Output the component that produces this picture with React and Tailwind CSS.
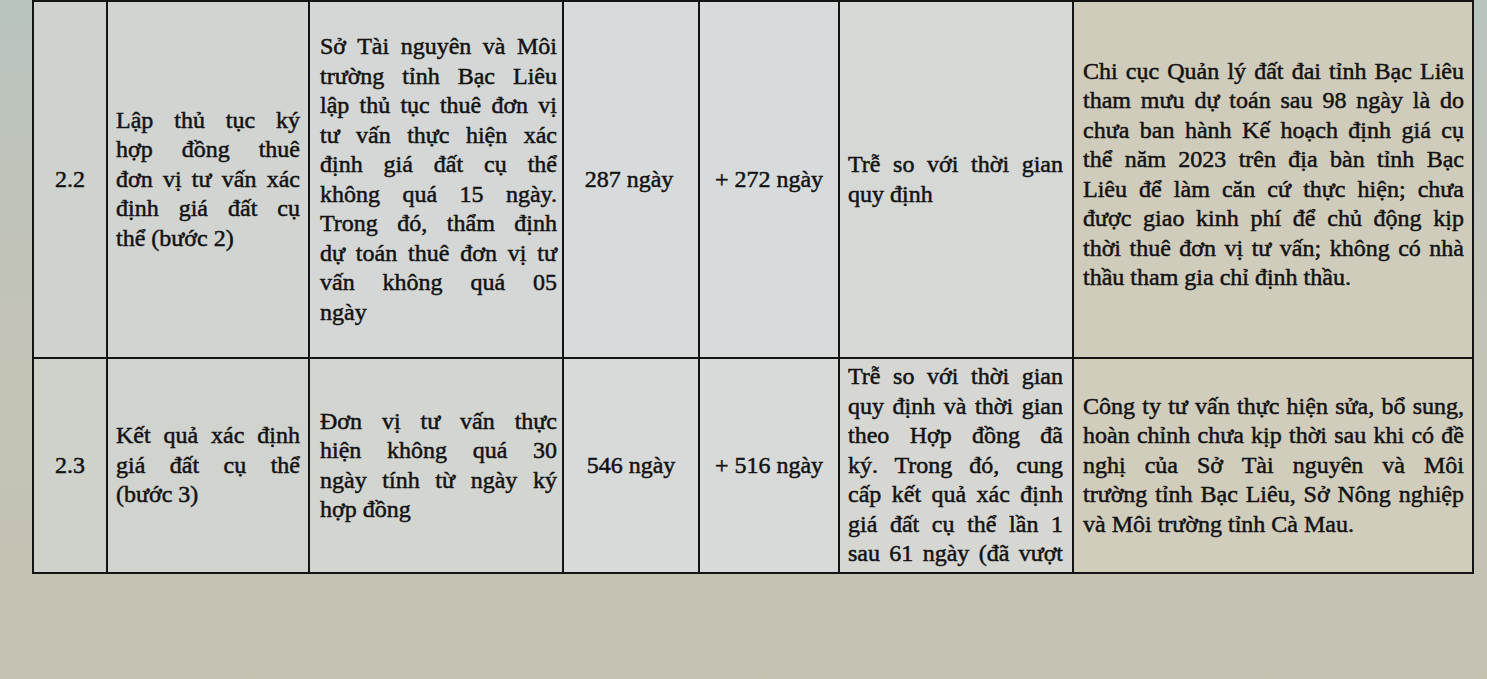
const cell = "border-2 border-[#141414] align-middle"

// each printed line is its own block so the breaks match the paper
function Lines({ lines, justifyLast = false }) {
  return (
    <>
      {lines.map((line, i) => {
        const last = i === lines.length - 1
        return (
          <div
            key={i}
            className={
              "whitespace-nowrap " +
              (last && !justifyLast ? "text-left" : "text-justify [text-align-last:justify]")
            }
          >
            {line}
          </div>
        )
      })}
    </>
  )
}

export default function App() {
  return (
    <div className="min-h-screen w-full bg-linear-to-b from-[#b9c4be] via-[#c4c3b7] to-[#c5c2b2] text-[#121212] [font-family:'Liberation_Serif','Times_New_Roman',serif] text-[24px] leading-[29.5px] [-webkit-text-stroke:0.5px_#121212]">
      <table className="ml-8 w-[1440px] table-fixed border-collapse">
        <colgroup>
          <col className="w-[74px]" />
          <col className="w-[202px]" />
          <col className="w-[254px]" />
          <col className="w-[136px]" />
          <col className="w-[140px]" />
          <col className="w-[234px]" />
          <col className="w-[400px]" />
        </colgroup>
        <tbody>
          <tr className="h-[357px]">
            <td className={cell + " bg-[#cfd3cf] text-center"}>2.2</td>
            <td className={cell + " bg-[#d1d4d1] pl-[8px] pr-[8px]"}>
              <Lines
                lines={[
                  "Lập thủ tục ký",
                  "hợp đồng thuê",
                  "đơn vị tư vấn xác",
                  "định giá đất cụ",
                  "thể (bước 2)",
                ]}
              />
            </td>
            <td className={cell + " bg-[#d4d7d5] pl-[10px] pr-[5px]"}>
              <Lines
                lines={[
                  "Sở Tài nguyên và Môi",
                  "trường tỉnh Bạc Liêu",
                  "lập thủ tục thuê đơn vị",
                  "tư vấn thực hiện xác",
                  "định giá đất cụ thể",
                  "không quá 15 ngày.",
                  "Trong đó, thẩm định",
                  "dự toán thuê đơn vị tư",
                  "vấn không quá 05",
                  "ngày",
                ]}
              />
            </td>
            <td className={cell + " bg-[#d8dbdc] text-center pr-[4px]"}>287 ngày</td>
            <td className={cell + " bg-[#d8dbdc] text-center"}>+ 272 ngày</td>
            <td className={cell + " bg-[#d6d8d6] pl-[8px] pr-[9px]"}>
              <Lines lines={["Trễ so với thời gian", "quy định"]} />
            </td>
            <td className={cell + " bg-[#d0ccbb] pl-[9px] pr-[8px] pb-[10px]"}>
              <Lines
                lines={[
                  "Chi cục Quản lý đất đai tỉnh Bạc Liêu",
                  "tham mưu dự toán sau 98 ngày là do",
                  "chưa ban hành Kế hoạch định giá cụ",
                  "thể năm 2023 trên địa bàn tỉnh Bạc",
                  "Liêu để làm căn cứ thực hiện; chưa",
                  "được giao kinh phí để chủ động kịp",
                  "thời thuê đơn vị tư vấn; không có nhà",
                  "thầu tham gia chỉ định thầu.",
                ]}
              />
            </td>
          </tr>
          <tr className="h-[215px]">
            <td className={cell + " bg-[#cfd1cb] text-center"}>2.3</td>
            <td className={cell + " bg-[#d1d3ce] pl-[8px] pr-[8px]"}>
              <Lines lines={["Kết quả xác định", "giá đất cụ thể", "(bước 3)"]} />
            </td>
            <td className={cell + " bg-[#d3d5d1] pl-[10px] pr-[5px]"}>
              <Lines
                lines={[
                  "Đơn vị tư vấn thực",
                  "hiện không quá 30",
                  "ngày tính từ ngày ký",
                  "hợp đồng",
                ]}
              />
            </td>
            <td className={cell + " bg-[#d8dad9] text-center"}>546 ngày</td>
            <td className={cell + " bg-[#d8dad9] text-center"}>+ 516 ngày</td>
            <td className={cell + " bg-[#d6d7d3] pl-[8px] pr-[9px] align-top pt-[3px]"}>
              <div className="h-[207px] overflow-hidden">
                <Lines
                  justifyLast
                  lines={[
                    "Trễ so với thời gian",
                    "quy định và thời gian",
                    "theo Hợp đồng đã",
                    "ký. Trong đó, cung",
                    "cấp kết quả xác định",
                    "giá đất cụ thể lần 1",
                    "sau 61 ngày (đã vượt",
                  ]}
                />
              </div>
            </td>
            <td className={cell + " bg-[#d1cdbc] pl-[9px] pr-[8px]"}>
              <Lines
                lines={[
                  "Công ty tư vấn thực hiện sửa, bổ sung,",
                  "hoàn chỉnh chưa kịp thời sau khi có đề",
                  "nghị của Sở Tài nguyên và Môi",
                  "trường tỉnh Bạc Liêu, Sở Nông nghiệp",
                  "và Môi trường tỉnh Cà Mau.",
                ]}
              />
            </td>
          </tr>
        </tbody>
      </table>
    </div>
  )
}
